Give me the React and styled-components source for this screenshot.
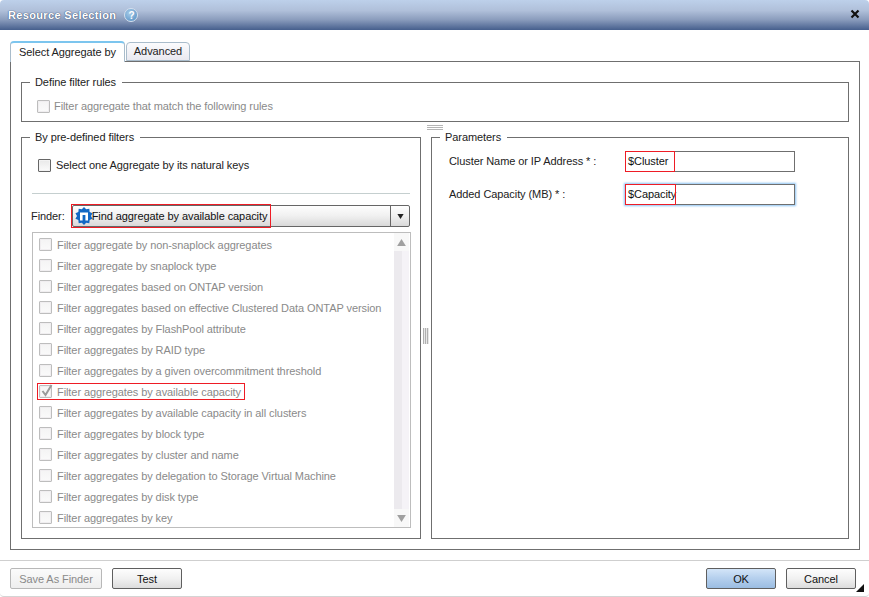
import React from "react";
import styled, { createGlobalStyle } from "styled-components";

const Global = createGlobalStyle`
  html, body { margin: 0; padding: 0; background: #fff; }
  body { font-family: "Liberation Sans", Arial, sans-serif; font-size: 11px; letter-spacing: -0.08px; color: #222; }
  * { box-sizing: border-box; }
`;

const Window = styled.div`
  position: relative;
  width: 869px;
  height: 597px;
  display: flex;
  flex-direction: column;
  background: #fff;
  overflow: hidden;
  border-bottom: 1px solid #d4d4d4;
  border-radius: 4px 4px 4px 4px;
`;
const TitleBar = styled.div`
  height: 30px;
  flex: none;
  display: flex;
  align-items: center;
  padding: 0 9px 0 8px;
  gap: 8px;
  background: linear-gradient(#bdd0ea 0%, #b0c0da 35%, #8b9dbd 65%, #465f8d 100%);
`;
const Title = styled.span`
  font-weight: 700;
  font-size: 11px;
  letter-spacing: 0.35px;
  color: #fff;
  text-shadow: 0 0 1px #3d5479, 0 0 1px #3d5479;
`;
const Help = styled.span`
  width: 14px;
  height: 14px;
  border-radius: 50%;
  display: inline-flex;
  align-items: center;
  justify-content: center;
  font-weight: 700;
  font-size: 10px;
  color: #fff;
  background: radial-gradient(circle at 40% 35%, #a7cbe8, #4f8cc2);
  border: 1px solid #d5e0ee;
`;
const CloseBox = styled.svg`
  margin-left: auto;
  margin-top: -2px;
  width: 10px;
  height: 10px;
`;
const Body = styled.div`
  flex: 1;
  display: flex;
  flex-direction: column;
  padding: 11px 9px 10px 10px;
`;
const TabStrip = styled.div`
  display: flex;
  align-items: flex-end;
  gap: 1px;
  height: 20px;
  flex: none;
  position: relative;
  z-index: 1;
`;
const Tab = styled.div`
  height: ${p => (p.$active ? "21px" : "19px")};
  width: ${p => p.$w}px;
  margin-bottom: ${p => (p.$active ? "-1px" : "0")};
  padding-bottom: ${p => (p.$active ? "2px" : "1px")};
  display: flex;
  align-items: center;
  justify-content: center;
  font-size: 11px;
  color: #222;
  border: 1px solid #a9bccb;
  border-bottom: ${p => (p.$active ? "none" : "1px solid #a9bccb")};
  border-top: ${p => (p.$active ? "2px solid #7cc5ee" : "1px solid #a9bccb")};
  border-radius: 4px 4px 0 0;
  background: ${p => (p.$active ? "#fff" : "linear-gradient(#fbfbfd, #e9e9f0)")};
`;
const TabPanel = styled.div`
  flex: 1;
  border: 1px solid #6f6f6f;
  padding: 13px 10px 10px 10px;
  display: flex;
  flex-direction: column;
  gap: 8px;
`;
const Group = styled.fieldset`
  margin: 0;
  min-width: 0;
  border: 1px solid #6f6f6f;
  padding: 0;
  flex: ${p => p.$grow || "none"};
  width: ${p => p.$w || "auto"};
  display: flex;
  flex-direction: column;
`;
const Legend = styled.legend`
  margin-left: 8px;
  padding: 0 6px 0 5px;
  font-size: 11px;
  line-height: 14px;
  color: #222;
`;
const GroupContent = styled.div`
  flex: 1;
  display: flex;
  flex-direction: column;
  padding: ${p => p.$pad};
`;
const Columns = styled.div`
  flex: 1;
  display: flex;
  gap: 10px;
  min-height: 0;
`;
const CheckRow = styled.div`
  position: relative;
  flex: none;
  display: flex;
  align-items: center;
  gap: ${p => p.$gap || 5}px;
  height: ${p => p.$h || 21}px;
  padding-left: ${p => p.$indent || 0}px;
  font-size: 11px;
  white-space: nowrap;
  color: ${p => (p.$off ? "#8a8a8a" : "#222")};
`;
const Box = styled.span`
  width: 13px;
  height: 13px;
  flex: none;
  display: inline-flex;
  border: 1px solid ${p => (p.$off ? "#bdbdbd" : "#666")};
  border-radius: 1px;
  background: ${p => (p.$off ? "linear-gradient(#f4f4f4,#fafafa)" : "linear-gradient(#e8e8e8,#fbfbfb)")};
  box-shadow: inset 0 0 0 1px ${p => (p.$off ? "#f0eef0" : "#f2f2f2")};
  position: relative;
`;
const Tick = styled.svg`
  position: absolute;
  left: 0;
  top: -3px;
  width: 14px;
  height: 15px;
`;
const Divider = styled.div`
  height: 1px;
  background: #c5cfcf;
  margin: 9px 10px 0 0;
`;
const FinderRow = styled.div`
  display: flex;
  align-items: center;
  gap: 7px;
  height: 22px;
  margin: 11px 10px 0 -1px;
  font-size: 11px;
`;
const Combo = styled.div`
  position: relative;
  flex: 1;
  height: 22px;
  display: flex;
  border: 1px solid #666;
  border-radius: 2px;
  background: linear-gradient(#fefefe, #f0f0f0 50%, #d9d9d9);
`;
const ComboValue = styled.div`
  flex: 1;
  display: flex;
  align-items: center;
  padding-left: 2px;
  font-size: 11px;
  color: #111;
`;
const ComboArrow = styled.div`
  width: 19px;
  border-left: 1px solid #666;
  display: flex;
  align-items: center;
  justify-content: center;
`;
const GearIcon = styled.svg`
  flex: none;
  width: 18px;
  height: 18px;
  margin-right: -1px;
`;
const Marker = styled.span`
  position: absolute;
  pointer-events: none;
  left: ${p => p.$x}px;
  top: ${p => p.$y}px;
  width: ${p => p.$w}px;
  height: ${p => p.$h}px;
  border: 1px solid #ee1c25;
`;
const List = styled.div`
  display: flex;
  margin: 5px 9px 0 0;
  height: 296px;
  border: 1px solid #bdbdbd;
  overflow: hidden;
`;
const ListRows = styled.div`
  flex: 1;
  padding: 1px 0 0 6px;
  display: flex;
  flex-direction: column;
`;
const Scroll = styled.div`
  width: 15px;
  margin-right: 1px;
  display: flex;
  flex-direction: column;
  justify-content: space-between;
  background: linear-gradient(90deg, #eceaee, #eceaee 50%, #f5f3f7 50%);
`;
const ScrollButton = styled.div`
  height: 18px;
  display: flex;
  align-items: center;
  justify-content: center;
  background: #f8f8f8;
`;
const Field = styled.div`
  display: flex;
  align-items: center;
  height: 22px;
  margin-bottom: ${p => p.$mb || 0}px;
  font-size: 11px;
  color: #222;
`;
const FieldLabel = styled.span`
  width: 176px;
  flex: none;
`;
const Input = styled.div`
  position: relative;
  width: 170px;
  height: 21px;
  display: flex;
  align-items: center;
  padding-left: 2px;
  font-size: 11px;
  color: #111;
  border: 1px solid #6f6f6f;
  box-shadow: ${p => (p.$focus ? "0 0 2px 1px #8cc3f3" : "none")};
`;
const Footer = styled.div`
  height: 36px;
  flex: none;
  border-top: 1px solid #cfcfcf;
  display: flex;
  align-items: center;
  padding: 0 13px 0 10px;
  gap: 10px;
`;
const Button = styled.div`
  width: ${p => p.$w || 70}px;
  height: 21px;
  display: flex;
  align-items: center;
  justify-content: center;
  font-size: 11px;
  border-radius: 2px;
  color: ${p => (p.$off ? "#8a8a8a" : "#111")};
  border: 1px solid ${p => (p.$off ? "#b8b8b8" : "#5f5f5f")};
  background: ${p =>
    p.$primary
      ? "linear-gradient(#d3e5f8, #b7d1ee 45%, #9bbde2)"
      : p.$off
      ? "linear-gradient(#fbfbfb, #eeeeee)"
      : "linear-gradient(#fdfdfd, #f1f1f1 50%, #dcdcdc)"};
`;
const Spacer = styled.div`
  flex: 1;
`;
const HGrip = styled.div`
  position: absolute;
  left: 427px;
  top: 125px;
  width: 16px;
  height: 5px;
  border-top: 1px solid #b5b5b5;
  border-bottom: 1px solid #b5b5b5;
  background: linear-gradient(#b5b5b5, #b5b5b5) 0 1px / 100% 1px no-repeat;
`;
const VGrip = styled.div`
  position: absolute;
  left: 423px;
  top: 328px;
  width: 6px;
  height: 16px;
  background: repeating-linear-gradient(90deg, #b0b0b0 0 1px, #e8e8e8 1px 2px);
`;
const ResizeGrip = styled.svg`
  position: absolute;
  right: 5px;
  bottom: 4px;
  width: 8px;
  height: 8px;
`;

const filters = [
  "Filter aggregate by non-snaplock aggregates",
  "Filter aggregate by snaplock type",
  "Filter aggregates based on ONTAP version",
  "Filter aggregates based on effective Clustered Data ONTAP version",
  "Filter aggregates by FlashPool attribute",
  "Filter aggregates by RAID type",
  "Filter aggregates by a given overcommitment threshold",
  "Filter aggregates by available capacity",
  "Filter aggregates by available capacity in all clusters",
  "Filter aggregates by block type",
  "Filter aggregates by cluster and name",
  "Filter aggregates by delegation to Storage Virtual Machine",
  "Filter aggregates by disk type",
  "Filter aggregates by key",
];

const gearPath = (() => {
  const pts = [];
  const n = 10;
  for (let i = 0; i < n * 2; i++) {
    const r = i % 2 ? 7 : 9;
    const a = (i * Math.PI) / n;
    pts.push(`${(9 + r * Math.sin(a)).toFixed(2)},${(9 - r * Math.cos(a)).toFixed(2)}`);
  }
  return pts.join(" ");
})();

const Gear = () => (
  <GearIcon viewBox="0 0 18 18">
    <polygon points={gearPath} fill="#1268c4" />
    <path d="M5 13.5V5.5h8v8h-2.6V8H7.6v5.5z" fill="#fff" />
  </GearIcon>
);

const Tri = ({ down, fill = "#a0a0a0", w = 9, h = 7 }) => (
  <svg width={w} height={h} viewBox="0 0 10 8">
    <path d={down ? "M0 0h10L5 8z" : "M5 0l5 8H0z"} fill={fill} />
  </svg>
);

export default function App() {
  return (
    <Window>
      <Global />
      <TitleBar>
        <Title>Resource Selection</Title>
        <Help>?</Help>
        <CloseBox viewBox="0 0 10 10">
          <path d="M1.5 1.5l7 7M8.5 1.5l-7 7" stroke="#111" strokeWidth="2.2" />
        </CloseBox>
      </TitleBar>
      <Body>
        <TabStrip>
          <Tab $active $w={115}>Select Aggregate by</Tab>
          <Tab $w={64}>Advanced</Tab>
        </TabStrip>
        <TabPanel>
          <Group>
            <Legend>Define filter rules</Legend>
            <GroupContent $pad="6px 0 4px 15px">
              <CheckRow $off $gap={4} $h={22}>
                <Box $off />
                Filter aggregate that match the following rules
              </CheckRow>
            </GroupContent>
          </Group>
          <Columns>
            <Group $w="400px">
              <Legend>By pre-defined filters</Legend>
              <GroupContent $pad="2px 0 0 10px">
                <CheckRow $h={38} $indent={6}>
                  <Box />
                  Select one Aggregate by its natural keys
                </CheckRow>
                <Divider />
                <FinderRow>
                  Finder:
                  <Combo>
                    <ComboValue>
                      <Gear />
                      Find aggregate by available capacity
                    </ComboValue>
                    <ComboArrow><Tri down fill="#222" w={9} h={5} /></ComboArrow>
                    <Marker $x={-2} $y={-2} $w={200} $h={24} />
                  </Combo>
                </FinderRow>
                <List>
                  <ListRows>
                    {filters.map((f, i) => (
                      <CheckRow key={f} $off>
                        {i === 7 ? (
                          <Box $off>
                            <Tick viewBox="0 0 14 15">
                              <path d="M2.5 8l3 4 6-10" fill="none" stroke="#9a9a9a" strokeWidth="2" />
                            </Tick>
                          </Box>
                        ) : (
                          <Box $off />
                        )}
                        {f}
                        {i === 7 && <Marker $x={-2} $y={2} $w={208} $h={17} />}
                      </CheckRow>
                    ))}
                  </ListRows>
                  <Scroll>
                    <ScrollButton><Tri /></ScrollButton>
                    <ScrollButton><Tri down /></ScrollButton>
                  </Scroll>
                </List>
              </GroupContent>
            </Group>
            <Group $grow="1">
              <Legend>Parameters</Legend>
              <GroupContent $pad="6px 0 0 17px">
                <Field $mb={11}>
                  <FieldLabel>Cluster Name or IP Address * :</FieldLabel>
                  <Input>
                    $Cluster
                    <Marker $x={-1} $y={-1} $w={50} $h={21} />
                  </Input>
                </Field>
                <Field>
                  <FieldLabel>Added Capacity (MB) * :</FieldLabel>
                  <Input $focus>
                    $Capacity
                    <Marker $x={-1} $y={-1} $w={51} $h={21} />
                  </Input>
                </Field>
              </GroupContent>
            </Group>
          </Columns>
        </TabPanel>
      </Body>
      <Footer>
        <Button $off $w={92}>Save As Finder</Button>
        <Button>Test</Button>
        <Spacer />
        <Button $primary>OK</Button>
        <Button>Cancel</Button>
      </Footer>
      <HGrip />
      <VGrip />
      <ResizeGrip viewBox="0 0 10 10">
        <path d="M10 0v10H0z" fill="#111" />
      </ResizeGrip>
    </Window>
  );
}
